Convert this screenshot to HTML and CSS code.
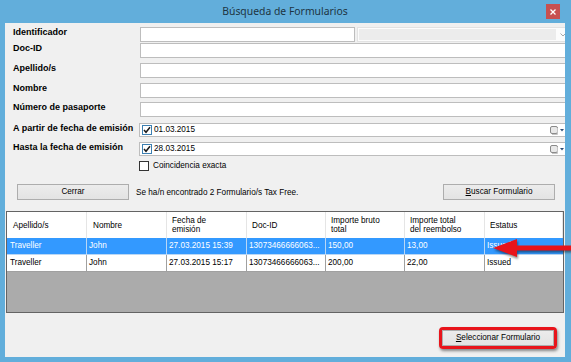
FILE: index.html
```html
<!DOCTYPE html>
<html lang="es">
<head>
<meta charset="utf-8">
<title>Búsqueda de Formularios</title>
<link rel="stylesheet" href="styles.css">
</head>
<body>
<div class="window">
  <div class="titlebar">
    <span></span>
    <span class="title">Búsqueda de Formularios</span>
    <span class="close"><svg width="6" height="6" viewBox="0 0 6 6"><path d="M0.5 0.5 L5.5 5.5 M5.5 0.5 L0.5 5.5" stroke="#fff" stroke-width="1.3"/></svg></span>
  </div>
  <div class="client">
    <div class="form">
      <span class="lbl">Identificador</span>
      <div class="idrow">
        <div class="input short"></div>
        <div class="combo"><div class="combo-inner"></div><svg class="chev" width="6" height="4" viewBox="0 0 6 4"><path d="M0.5 0.5 L3 3 L5.5 0.5" fill="none" stroke="#a8a8a8" stroke-width="1"/></svg></div>
      </div>
      <span class="lbl">Doc-ID</span>
      <div class="input"></div>
      <span class="lbl">Apellido/s</span>
      <div class="input"></div>
      <span class="lbl">Nombre</span>
      <div class="input"></div>
      <span class="lbl">Número de pasaporte</span>
      <div class="input"></div>
      <span class="lbl">A partir de fecha de emisión</span>
      <div class="date">
        <span class="cb checked"><svg width="8" height="8" viewBox="0 0 8 8"><path d="M1 4 L3 6.3 L7 1.2" fill="none" stroke="#1a1a1a" stroke-width="1.5"/></svg></span>
        <span class="date-text">01.03.2015</span>
        <span class="cal"><svg width="14" height="9" viewBox="0 0 14 9"><rect x="0.5" y="0.5" width="7" height="7" rx="1.5" fill="#e8e8e8" stroke="#8a8a8a"/><path d="M2 8.5 H7.5 V2" fill="none" stroke="#c4c4c4"/><path d="M10 3 H14 L12 5.5 Z" fill="#2d4e78"/></svg></span>
      </div>
      <span class="lbl">Hasta la fecha de emisión</span>
      <div class="date">
        <span class="cb checked"><svg width="8" height="8" viewBox="0 0 8 8"><path d="M1 4 L3 6.3 L7 1.2" fill="none" stroke="#1a1a1a" stroke-width="1.5"/></svg></span>
        <span class="date-text">28.03.2015</span>
        <span class="cal"><svg width="14" height="9" viewBox="0 0 14 9"><rect x="0.5" y="0.5" width="7" height="7" rx="1.5" fill="#e8e8e8" stroke="#8a8a8a"/><path d="M2 8.5 H7.5 V2" fill="none" stroke="#c4c4c4"/><path d="M10 3 H14 L12 5.5 Z" fill="#2d4e78"/></svg></span>
      </div>
      <span></span>
      <div class="check-row"><span class="cb"></span><span class="txt">Coincidencia exacta</span></div>
    </div>

    <div class="actions">
      <span class="btn">Cerrar</span>
      <span class="msg">Se ha/n encontrado 2 Formulario/s Tax Free.</span>
      <span class="btn push"><u>B</u>uscar Formulario</span>
    </div>

    <div class="grid">
      <div class="row head">
        <span class="cell">Apellido/s</span>
        <span class="cell">Nombre</span>
        <span class="cell">Fecha de<br>emisión</span>
        <span class="cell">Doc-ID</span>
        <span class="cell">Importe bruto<br>total</span>
        <span class="cell">Importe total<br>del reembolso</span>
        <span class="cell">Estatus</span>
      </div>
      <div class="row sel">
        <span class="cell first">Traveller</span>
        <span class="cell">John</span>
        <span class="cell">27.03.2015 15:39</span>
        <span class="cell">13073466666063...</span>
        <span class="cell">150,00</span>
        <span class="cell">13,00</span>
        <span class="cell">Issued</span>
      </div>
      <div class="row">
        <span class="cell first">Traveller</span>
        <span class="cell">John</span>
        <span class="cell">27.03.2015 15:17</span>
        <span class="cell">13073466666063...</span>
        <span class="cell">200,00</span>
        <span class="cell">22,00</span>
        <span class="cell">Issued</span>
      </div>
    </div>

    <div class="footer">
      <div class="highlight"><span class="btn"><u>S</u>eleccionar Formulario</span></div>
    </div>
  </div>

  <svg class="arrow" width="81" height="24" viewBox="0 0 81 24">
    <path d="M3 12 L27 3 L27 9.5 L81 9.5 L81 14.5 L27 14.5 L27 21 Z" fill="#e8141b"/>
  </svg>
</div>
</body>
</html>
```

FILE: styles.css
```css
* { box-sizing: border-box; }

html, body {
  margin: 0;
  padding: 0;
}

body {
  width: 571px;
  height: 362px;
  overflow: hidden;
  font-family: "Liberation Sans", Arial, sans-serif;
  color: #000;
}

.window {
  position: relative;
  width: 571px;
  height: 362px;
  background: #62aedb;
  padding: 0 6px 5px 5px;
  display: flex;
  flex-direction: column;
}

.titlebar {
  height: 23px;
  display: grid;
  grid-template-columns: 1fr auto 1fr;
  align-items: start;
}

.title {
  font-family: "Noto Sans", "Open Sans", sans-serif;
  font-size: 10.4px;
  line-height: 23px;
  color: #1d3442;
  white-space: nowrap;
}

.close {
  justify-self: end;
  margin-top: 4px;
  margin-right: 5px;
  width: 14px;
  height: 15px;
  background: #c75050;
  display: flex;
  align-items: center;
  justify-content: center;
}

.close svg { display: block; }

.client {
  flex: 1;
  background: #f0f0f0;
  overflow: hidden;
  display: flex;
  flex-direction: column;
  padding-top: 4px;
}

.form {
  display: grid;
  grid-template-columns: 127px 1fr;
  grid-template-rows: 16px 20px 20px 19px 21px 19px 19px 23px;
  padding-left: 8px;
}

.lbl {
  font-weight: bold;
  font-size: 9px;
  line-height: 11px;
  white-space: nowrap;
}

.input {
  height: 15px;
  width: calc(100% + 4px);
  background: #fff;
  border: 1px solid #bdbdbd;
}

.idrow {
  display: flex;
  gap: 2px;
  width: calc(100% + 6px);
}

.input.short {
  width: 215px;
  flex: none;
}

.combo {
  flex: 1;
  height: 15px;
  border: 1px solid #e2e2e2;
  background: #fcfcfc;
  padding: 1px 2px 1px 1px;
  display: flex;
  align-items: center;
  gap: 2px;
}

.combo-inner {
  width: 197px;
  height: 100%;
  background: #ececec;
}

.chev { display: block; margin-left: 2px; }

.date {
  margin-left: -1px;
  width: calc(100% + 4px);
  height: 14px;
  background: #fff;
  border: 1px solid #bdbdbd;
  display: flex;
  align-items: center;
  padding: 0 7px 0 2px;
}

.cb {
  width: 10px;
  height: 10px;
  flex: none;
  background: #fff;
  border: 1px solid #333;
  display: flex;
  align-items: center;
  justify-content: center;
}

.cb.checked {
  border-color: #3c7fb1;
}

.cb svg { display: block; }

.date-text {
  margin-left: 2px;
  font-size: 8.2px;
  line-height: 12px;
}

.cal {
  margin-left: auto;
  display: flex;
}

.cal svg { display: block; }

.check-row {
  margin-left: -1px;
  display: flex;
  align-items: center;
  gap: 4px;
  height: 10px;
}

.txt {
  font-size: 8.2px;
  line-height: 10px;
}

.actions {
  height: 16px;
  display: flex;
  align-items: center;
  padding: 0 10px 0 12px;
}

.btn {
  width: 112px;
  height: 16px;
  flex: none;
  border: 1px solid #adadad;
  background: linear-gradient(#ececec, #e3e3e3);
  font-size: 8.2px;
  line-height: 14px;
  text-align: center;
  white-space: nowrap;
}

.btn u { text-decoration-thickness: 1px; text-underline-offset: 1px; }

.msg {
  margin-left: 7px;
  font-size: 8.2px;
  white-space: nowrap;
}

.push { margin-left: auto; }

.grid {
  margin: 11px 1px 0 1px;
  height: 102px;
  border: 1px solid #646464;
  background: #ababab;
  overflow: hidden;
}

.row {
  display: grid;
  grid-template-columns: 80px 80px 80px 79px 79px 80px 78px;
  height: 17px;
  background: #fff;
  font-size: 8.2px;
}

.row .cell {
  border-right: 1px solid #a0a0a0;
  border-bottom: 1px solid #a0a0a0;
  padding-left: 2px;
  line-height: 16px;
  white-space: nowrap;
  overflow: hidden;
}

.row .cell.first { padding-left: 3px; }

.row .cell:last-child { border-right: none; }

.row.head {
  height: 26px;
}

.row.head .cell {
  border-right: 1px solid #e5e5e5;
  border-bottom: none;
  padding-left: 5px;
  line-height: 9px;
  display: flex;
  align-items: center;
}

.row.head .cell:first-child,
.row.head .cell:nth-child(2) { padding-left: 6px; }

.row.sel {
  background: #3399ff;
  color: #fff;
}

.row.sel .cell { border-color: #b9d7f5; }

.footer {
  flex: 1;
  display: flex;
  justify-content: flex-end;
  align-items: flex-start;
  padding: 14px 8px 0 0;
}

.highlight {
  border: 3px solid #e8141b;
  border-radius: 4px;
  box-shadow: 1px 2px 3px rgba(0, 0, 0, 0.45);
}

.highlight .btn { display: block; }

.arrow {
  position: absolute;
  left: 490px;
  top: 236px;
  filter: drop-shadow(1px 2px 1px rgba(0, 0, 0, 0.45));
}
```
